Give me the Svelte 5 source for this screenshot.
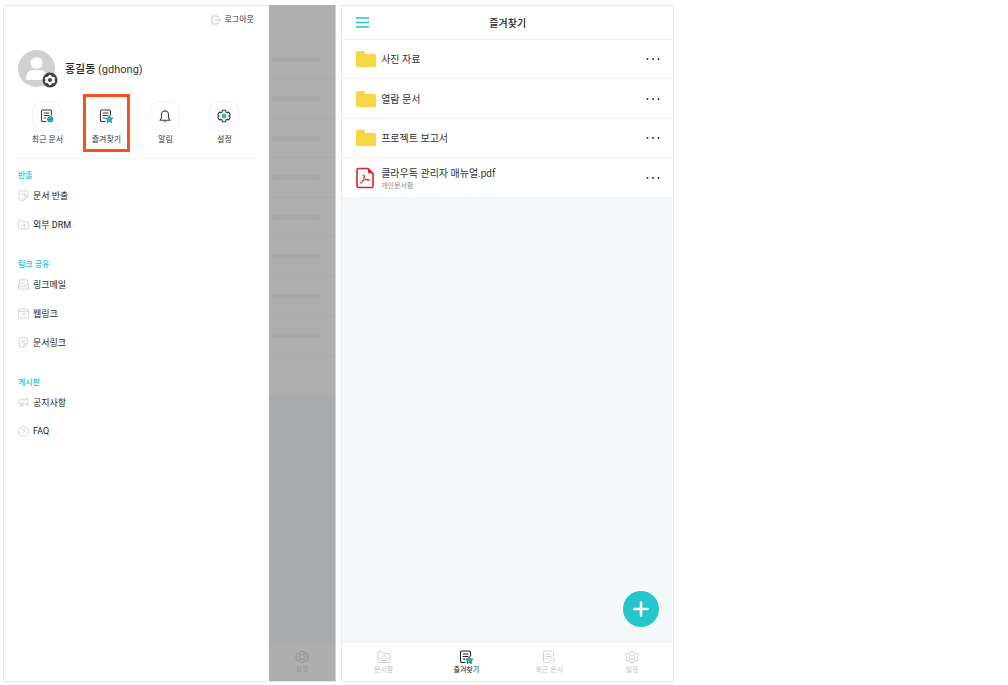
<script lang="ts">
  interface MenuItem {
    icon: string;
    label: string;
  }

  interface MenuSection {
    title: string;
    items: MenuItem[];
  }

  let activeTab = $state('favorite');

  const shortcuts = [
    { id: 'recent', label: '최근 문서' },
    { id: 'favorite', label: '즐겨찾기' },
    { id: 'alarm', label: '알림' },
    { id: 'setting', label: '설정' },
  ];

  const sections: MenuSection[] = [
    {
      title: '반출',
      items: [
        { icon: 'export', label: '문서 반출' },
        { icon: 'drm', label: '외부 DRM' },
      ],
    },
    {
      title: '링크 공유',
      items: [
        { icon: 'mail', label: '링크메일' },
        { icon: 'web', label: '웹링크' },
        { icon: 'doclink', label: '문서링크' },
      ],
    },
    {
      title: '게시판',
      items: [
        { icon: 'notice', label: '공지사항' },
        { icon: 'faq', label: 'FAQ' },
      ],
    },
  ];

  const files = [
    { type: 'folder', name: '사진 자료', path: '' },
    { type: 'folder', name: '열람 문서', path: '' },
    { type: 'folder', name: '프로젝트 보고서', path: '' },
    { type: 'pdf', name: '클라우독 관리자 매뉴얼.pdf', path: '개인문서함' },
  ];

  const tabs = [
    { id: 'box', label: '문서함' },
    { id: 'favorite', label: '즐겨찾기' },
    { id: 'recent', label: '최근 문서' },
    { id: 'setting', label: '설정' },
  ];

  const dimRows = [1, 2, 3, 4, 5, 6, 7, 8];
</script>

{#snippet mainIcon(id: string)}
  <svg class="main-icon" viewBox="0 0 28 28" aria-hidden="true">
    {#if id === 'recent' || id === 'favorite'}
      <path d="M13 25H5.500a2.500 2.500 0 0 1-2.500-2.500V4.500A2.500 2.500 0 0 1 5.500 2H20.500A2.500 2.500 0 0 1 23 4.500V13" />
      <path d="M7.500 8H18.500M7.500 13H18.500M7.500 18H12" />
      {#if id === 'recent'}
        <circle class="accent" cx="20.500" cy="20.500" r="5.500" />
        <path class="thin" d="M18.500 20.500l1.500 1.500 2.500-3" />
      {:else}
        <path class="accent" d="M20.500 13l2.300 4.800 5 .7-3.700 3.500.9 5.200-4.500-2.500-4.500 2.500.9-5.200-3.700-3.500 5-.7z" />
      {/if}
    {:else if id === 'alarm'}
      <path class="fill" d="M11 23.500h6a3 3 0 0 1-6 0z" />
      <path d="M14 4c-4.500 0-7 3.500-7 7.500v6.500l-3 4.500h20l-3-4.500v-6.500c0-4-2.500-7.500-7-7.500zM14 1.500V4" />
    {:else if id === 'setting'}
      <path d="M11 2.500h6l1 3.500 2 1.200 3.500-.9 3 5.200-2.500 2.500 2.500 2.500-3 5.200-3.500-.9-2 1.200-1 3.500h-6l-1-3.500-2-1.200-3.500.9-3-5.200L4 14l-2.500-2.500 3-5.200 3.500.9L10 6z" />
      <circle class="core" cx="14" cy="14" r="5" />
    {:else}
      <path d="M2 5a2 2 0 0 1 2-2h6l3 4h11a2 2 0 0 1 2 2v14a2 2 0 0 1-2 2H4a2 2 0 0 1-2-2z" />
      <path d="M14 10.500l-5.500 5.500v5h11v-5z" />
    {/if}
  </svg>
{/snippet}

{#snippet menuIcon(id: string)}
  <svg class="menu-icon" viewBox="0 0 20 20" aria-hidden="true">
    {#if id === 'export'}
      <path d="M11 18.500H4a2 2 0 0 1-2-2v-13a2 2 0 0 1 2-2h12a2 2 0 0 1 2 2V12zM18 12h-5a2 2 0 0 0-2 2v4.500M6 8h8M11 5l3 3-3 3" />
    {:else if id === 'drm'}
      <path d="M1 4a1.500 1.500 0 0 1 1.500-1.500H7l2 3h8.500A1.500 1.500 0 0 1 19 7v9a1.500 1.500 0 0 1-1.500 1.500h-15A1.500 1.500 0 0 1 1 16zM6 11.500h8M11 8.500l3 3-3 3" />
    {:else if id === 'mail'}
      <path d="M3 8V3a1.500 1.500 0 0 1 1.500-1.500h11A1.500 1.500 0 0 1 17 3v5M1 8v9a1.500 1.500 0 0 0 1.500 1.500h15A1.500 1.500 0 0 0 19 17V8l-9 6zM1 18l5-6M19 18l-5-6M8 9l4-4M7 7l2-2M11 9l2-2" />
    {:else if id === 'web'}
      <path d="M3 2h14a2 2 0 0 1 2 2v12a2 2 0 0 1-2 2H3a2 2 0 0 1-2-2V4a2 2 0 0 1 2-2zM1 6h18M8.500 13.500l4-4M7 12l2-2.500M11 14l2.500-2" />
    {:else if id === 'doclink'}
      <path d="M11 18.500H4a2 2 0 0 1-2-2v-13a2 2 0 0 1 2-2h11a2 2 0 0 1 2 2V12zM17 12h-4a2 2 0 0 0-2 2v4.500M7 11l5-5M6 9l3-3M9 11.500l3-3" />
    {:else if id === 'notice'}
      <path d="M13 5H3.500A2.500 2.500 0 0 0 1 7.500v2A2.500 2.500 0 0 0 3.500 12H13l4 2.500v-12zM15 2.500h4M15 14.500h4M5 12v4.500h4V12" />
    {:else}
      <circle cx="10" cy="10" r="9" />
      <path d="M7.500 8a2.500 2.500 0 1 1 3.500 2.200c-.8.400-1 .8-1 1.800M10 14v1.500" />
    {/if}
  </svg>
{/snippet}

<main class="page">
  <section class="phone side">
    <aside class="drawer">
      <button class="logout">
        <svg viewBox="0 0 20 20" aria-hidden="true">
          <path d="M14 6V3.500A1.500 1.500 0 0 0 12.500 2h-9A1.500 1.500 0 0 0 2 3.500v13A1.500 1.500 0 0 0 3.500 18h9a1.500 1.500 0 0 0 1.500-1.500V14M8 10h11M16 7l3 3-3 3" />
        </svg>
        로그아웃
      </button>

      <div class="profile">
        <div class="avatar">
          <svg viewBox="0 0 37 37" aria-hidden="true">
            <circle cx="18.500" cy="18.500" r="18.500" fill="#d0d0d0" />
            <circle cx="18.500" cy="13" r="6" fill="#fff" />
            <path d="M8 30v-2.500c0-4.500 3-7.500 7-7.500h7c4 0 7 3 7 7.500V30z" fill="#fff" />
          </svg>
          <button class="avatar-edit" aria-label="프로필 설정">
            <svg viewBox="0 0 16 16" aria-hidden="true">
              <circle cx="8" cy="8" r="7.500" fill="#414141" />
              <path d="M6.800 3h2.400l.4 1.500 1 .6 1.500-.4 1.200 2.100L12.200 8l1.100 1.200-1.200 2.100-1.500-.4-1 .6-.4 1.500H6.800l-.4-1.500-1-.6-1.500.4-1.200-2.100L3.800 8 2.700 6.800l1.200-2.100 1.500.4 1-.6z" fill="#fff" />
              <circle cx="8" cy="8" r="2" fill="#414141" />
            </svg>
          </button>
        </div>
        <p class="user"><strong>홍길동</strong> (gdhong)</p>
      </div>

      <div class="shortcuts">
        {#each shortcuts as item}
          <button class="shortcut" class:marked={item.id === 'favorite'}>
            <span class="tile">{@render mainIcon(item.id)}</span>
            <span>{item.label}</span>
          </button>
        {/each}
      </div>

      <nav class="menu">
        {#each sections as section}
          <div class="menu-section">
            <h2>{section.title}</h2>
            <ul>
              {#each section.items as item}
                <li>
                  <a href="#{item.icon}">
                    {@render menuIcon(item.icon)}
                    {item.label}
                  </a>
                </li>
              {/each}
            </ul>
          </div>
        {/each}
      </nav>
    </aside>

    <div class="dimmed">
      <div class="dim-list">
        <div class="dim-head"></div>
        {#each dimRows as row (row)}
          <div class="dim-row"><span></span></div>
        {/each}
        <div class="dim-row"></div>
      </div>
      <div class="dim-tab">
        {@render mainIcon('setting')}
        <span>설정</span>
      </div>
    </div>
  </section>

  <section class="phone">
    <header class="topbar">
      <button class="hamburger" aria-label="메뉴">
        <svg viewBox="0 0 13 11" aria-hidden="true">
          <path d="M0 1h13M0 5.500h13M0 10h13" stroke="#27c4cb" stroke-width="1.400" />
        </svg>
      </button>
      <h1>즐겨찾기</h1>
    </header>

    <ul class="files">
      {#each files as file}
        <li>
          {#if file.type === 'folder'}
            <svg class="file-icon" viewBox="0 0 20 18" aria-hidden="true">
              <path d="M0 2.500A1.500 1.500 0 0 1 1.500 1H7.500A1.500 1.500 0 0 1 9 2.500V4h9.500A1.500 1.500 0 0 1 20 5.500v10a1.500 1.500 0 0 1-1.500 1.500h-17A1.500 1.500 0 0 1 0 15.500z" fill="#f6d643" />
            </svg>
          {:else}
            <svg class="file-icon pdf" viewBox="0 0 20 22" aria-hidden="true">
              <path d="M2.500 1.500H12L17 6.500V19a1.500 1.500 0 0 1-1.500 1.500h-13A1.500 1.500 0 0 1 1 19V3a1.500 1.500 0 0 1 1.500-1.500z" fill="#fff" stroke="#d7262b" stroke-width="1.600" />
              <path d="M12 1.500V5a1.500 1.500 0 0 0 1.500 1.500H17z" fill="#d7262b" />
              <path d="M7.500 7.500c1.200 0 1 2.800.2 5-.8 2.100-2 4-3 3.700-1.200-.6.800-2.400 3.500-3.200 2.500-.7 5.800-.8 5.600.3-.3 1.100-3.300-.1-4.700-1.600-1.300-1.400-2.600-4.200-1.600-4.200z" fill="none" stroke="#d7262b" stroke-width="0.900" />
            </svg>
          {/if}
          <div class="file-text">
            <p>{file.name}</p>
            {#if file.path}
              <small>{file.path}</small>
            {/if}
          </div>
          <button class="more" aria-label="더보기">
            <svg viewBox="0 0 14 4" aria-hidden="true">
              <circle cx="1.500" cy="2" r="0.900" />
              <circle cx="7" cy="2" r="0.900" />
              <circle cx="12.500" cy="2" r="0.900" />
            </svg>
          </button>
        </li>
      {/each}
    </ul>

    <div class="empty">
      <button class="fab" aria-label="추가">
        <svg viewBox="0 0 36 36" aria-hidden="true">
          <path d="M18 11.500v13M11.500 18h13" stroke="#fff" stroke-width="2.600" stroke-linecap="round" />
        </svg>
      </button>
    </div>

    <nav class="tabbar">
      {#each tabs as tab}
        <button class:active={activeTab === tab.id} onclick={() => (activeTab = tab.id)}>
          {@render mainIcon(tab.id)}
          <span>{tab.label}</span>
        </button>
      {/each}
    </nav>
  </section>
</main>

<style>
  :global(body) {
    background: #fff;
  }

  .page {
    display: flex;
    gap: 5px;
    box-sizing: border-box;
    min-height: 100vh;
    padding: 5px 3px 3px;
    font-family: Roboto, 'Noto Sans CJK KR', sans-serif;
    font-size: 10px;
    color: #333;
  }

  .page * {
    box-sizing: border-box;
  }

  h1, h2, p, ul {
    margin: 0;
    padding: 0;
  }

  ul {
    list-style: none;
  }

  svg {
    display: block;
  }

  button {
    margin: 0;
    padding: 0;
    border: none;
    background: none;
    color: inherit;
    font: inherit;
    cursor: pointer;
  }

  .phone {
    display: flex;
    flex-direction: column;
    flex: 0 0 33.25%;
    border: 1px solid #e9e9e9;
    background: #fff;
  }

  .phone.side {
    flex-direction: row;
    border-right-color: #cfcfcf;
  }

  .drawer {
    flex: 0 0 80%;
    padding: 8px 15px 0 14px;
  }

  .logout {
    display: flex;
    align-items: center;
    gap: 3px;
    height: 12px;
    margin-left: auto;
    font-size: 8px;
    line-height: 12px;
  }

  .logout svg {
    width: 10px;
    height: 10px;
    fill: none;
    stroke: #bbb;
    stroke-width: 1.6;
  }

  .profile {
    display: flex;
    align-items: center;
    gap: 10px;
    margin-top: 24px;
  }

  .avatar {
    position: relative;
    width: 37px;
    height: 37px;
  }

  .avatar-edit {
    position: absolute;
    right: -3px;
    bottom: -1px;
    width: 16px;
    height: 16px;
  }

  .user {
    padding-top: 2px;
    font-size: 11px;
    line-height: 16px;
  }

  .user strong {
    font-weight: 500;
    color: #222;
  }

  .shortcuts {
    display: grid;
    grid-template-columns: repeat(4, 1fr);
    justify-items: center;
    margin-top: 7px;
    padding-bottom: 6px;
    border-bottom: 1px solid #f3f3f3;
  }

  .shortcut {
    display: flex;
    flex-direction: column;
    align-items: center;
    gap: 3px;
    width: 47px;
    height: 58px;
    padding-top: 4px;
    border: 3px solid transparent;
    font-size: 8px;
    line-height: 12px;
    white-space: nowrap;
  }

  .shortcut.marked {
    border-color: #fa4f26;
  }

  .tile {
    display: grid;
    place-items: center;
    width: 30px;
    height: 30px;
    border: 1px solid #f4f4f4;
    border-radius: 10px;
  }

  .main-icon {
    width: 14px;
    height: 14px;
    fill: none;
    stroke: #3c3c3c;
    stroke-width: 2.2;
    stroke-linejoin: round;
  }

  .main-icon .accent {
    fill: #14c8d0;
    stroke-width: 1.2;
  }

  .main-icon .thin {
    stroke-width: 1.4;
  }

  .main-icon .core,
  .main-icon .fill {
    fill: #27c4cb;
    stroke: none;
  }

  .menu {
    display: flex;
    flex-direction: column;
    gap: 20px;
    padding-top: 10px;
  }

  .menu h2 {
    height: 12px;
    font-size: 8px;
    font-weight: 500;
    line-height: 14px;
    color: #27c4cb;
  }

  .menu ul {
    display: grid;
    gap: 1px;
  }

  .menu a {
    display: flex;
    align-items: center;
    gap: 4px;
    height: 28px;
    font-size: 9px;
    color: #222;
    text-decoration: none;
  }

  .menu-icon {
    width: 11px;
    height: 11px;
    fill: none;
    stroke: #c8c8c8;
    stroke-width: 1.4;
    stroke-linejoin: round;
  }

  .dimmed {
    display: flex;
    flex: 1;
    flex-direction: column;
    margin-top: -1px;
    background: #a9acad;
  }

  .dim-list {
    flex: 0 0 auto;
    background: #afafaf;
  }

  .dim-head {
    height: 35px;
  }

  .dim-row {
    display: flex;
    align-items: center;
    height: 39px;
    padding: 0 15px 0 3px;
    border-bottom: 1px solid #a9a9a9;
  }

  .dim-row:nth-child(odd) {
    height: 40px;
  }

  .dim-row:last-child {
    border: none;
  }

  .dim-row span {
    flex: 1;
    height: 5px;
    border-radius: 2px;
    background: #a8a8a8;
  }

  .dim-tab {
    display: flex;
    flex-direction: column;
    align-items: center;
    height: 38px;
    margin-top: auto;
    padding-top: 7px;
    background: #aeaeae;
    color: #969696;
    font-size: 7px;
    line-height: 10px;
  }

  .dim-tab .main-icon {
    stroke: #969696;
  }

  .dim-tab .core,
  .tabbar button:not(.active) .core {
    fill: none;
    stroke: currentColor;
  }

  .topbar {
    display: grid;
    grid-template-columns: 13px 1fr 13px;
    align-items: center;
    height: 34px;
    padding: 0 14px;
    border-bottom: 1px solid #f2f2f2;
  }

  .hamburger svg {
    width: 13px;
    height: 11px;
  }

  .topbar h1 {
    font-size: 10px;
    font-weight: 500;
    text-align: center;
    color: #222;
  }

  .files li {
    display: flex;
    align-items: center;
    gap: 5px;
    height: 39px;
    padding: 0 13px 0 14px;
    border-bottom: 1px solid #f2f2f2;
  }

  .files li:nth-child(even) {
    height: 40px;
  }

  .file-icon {
    width: 20px;
    height: 18px;
  }

  .file-icon.pdf {
    height: 22px;
  }

  .file-text {
    flex: 1;
    padding-top: 2px;
    line-height: 14px;
  }

  .file-text small {
    display: block;
    font-size: 7px;
    line-height: 10px;
    color: #888;
  }

  .more svg {
    width: 14px;
    height: 4px;
    fill: #222;
  }

  .empty {
    position: relative;
    flex: 1;
    background: #f4f8fa;
  }

  .fab {
    position: absolute;
    right: 14px;
    bottom: 16px;
    width: 36px;
    height: 36px;
    border-radius: 50%;
    background: #24c5cb;
  }

  .tabbar {
    display: grid;
    grid-template-columns: repeat(4, 1fr);
    height: 38px;
  }

  .tabbar button {
    display: flex;
    flex-direction: column;
    align-items: center;
    padding-top: 7px;
    font-size: 7px;
    line-height: 12px;
    color: #c4c4c4;
  }

  .tabbar button.active {
    color: #222;
  }

  .tabbar .main-icon {
    stroke: currentColor;
  }

  .tabbar button:not(.active) .main-icon {
    stroke-width: 1.6;
  }

  .tabbar button:not(.active) .accent {
    fill: none;
  }
</style>
